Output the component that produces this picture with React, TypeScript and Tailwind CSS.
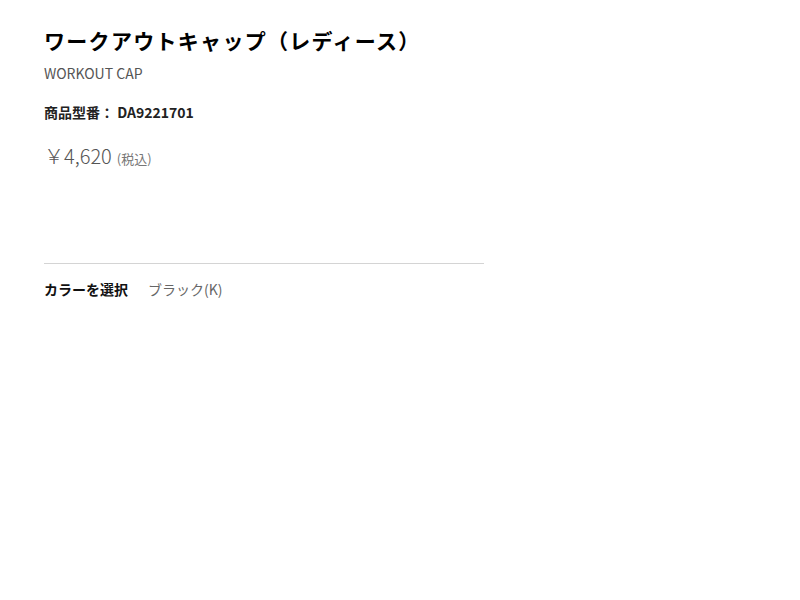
export default function App() {
  return (
    <div
      className="w-[800px] h-[600px] bg-white text-[#111]"
      style={{ fontFamily: '"Noto Sans CJK JP", "Noto Sans", sans-serif' }}
    >
      <div className="w-[440px] ml-[44px] pt-[24px]">
        <h1 className="text-[21px] leading-[32px] font-bold tracking-[1.3px] text-black">
          ワークアウトキャップ（レディース）
        </h1>
        <p className="mt-[7px] text-[14px] leading-[20px] text-[#555]">WORKOUT CAP</p>
        <p className="mt-[19px] text-[14px] leading-[20px] font-bold text-[#222]">
          商品型番： DA9221701
        </p>
        <p className="mt-[20px] flex items-baseline text-[#555]">
          <span className="text-[20px] leading-[28px] font-light">￥4,620</span>
          <span className="ml-[5px] text-[13px] text-[#777]">(税込)</span>
        </p>
        <div className="mt-[93px] border-t border-[#d4d4d4]" />
        <div className="mt-[15px] flex items-center text-[14px] leading-[20px]">
          <span className="font-bold text-[#111]">カラーを選択</span>
          <span className="ml-[20px] text-[#666]">ブラック(K)</span>
        </div>
      </div>
    </div>
  );
}
